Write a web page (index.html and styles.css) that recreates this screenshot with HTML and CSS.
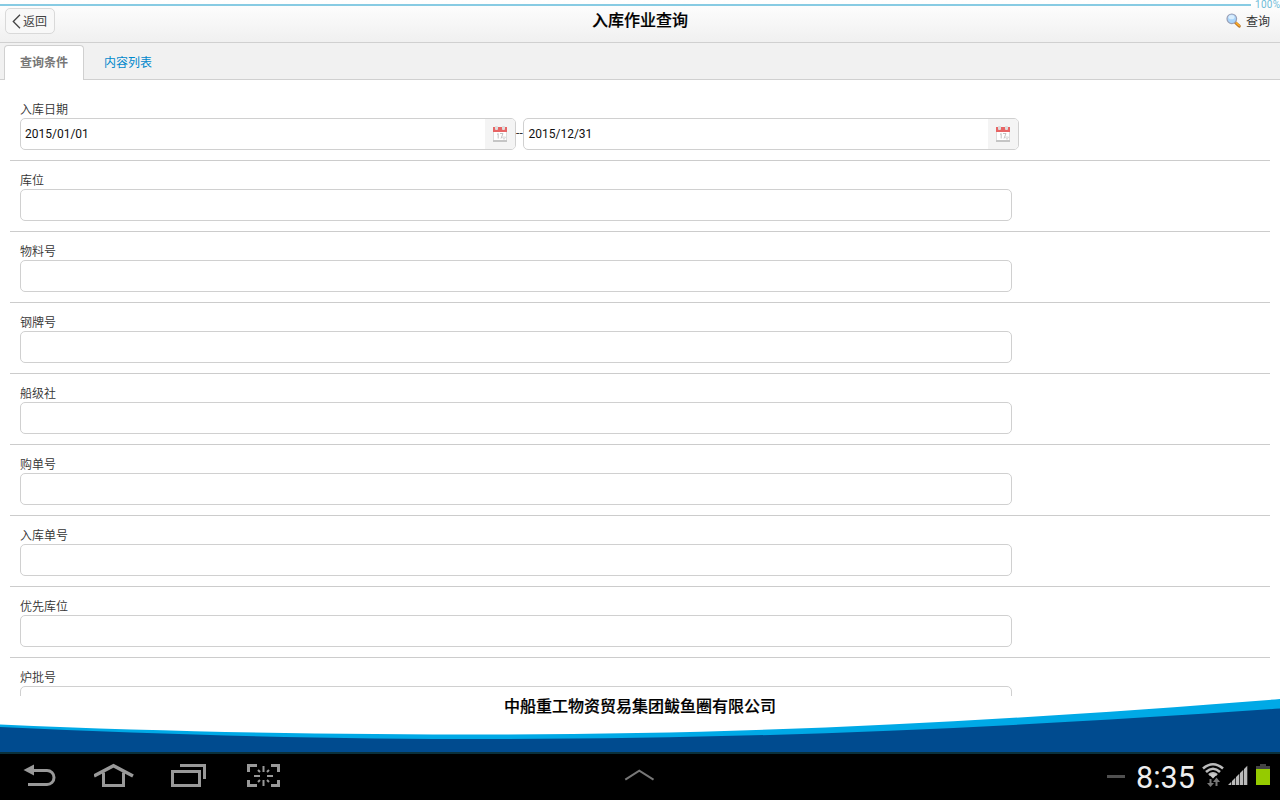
FILE: index.html
```html
<!DOCTYPE html>
<html lang="zh-CN">
<head>
<meta charset="utf-8">
<title>入库作业查询</title>
<link rel="stylesheet" href="styles.css">
</head>
<body>
<div class="screen">
  <header class="header">
    <div class="progress"><span class="progress-line"></span><span class="progress-text">100%</span></div>
    <button class="back"><svg class="back-icon" width="9" height="15" viewBox="0 0 9 15"><path d="M8 .8 1.3 7.5 8 14.2" fill="none" stroke="#444" stroke-width="1.3"/></svg><span class="back-text">返回</span></button>
    <h1 class="title">入库作业查询</h1>
    <a class="search">
      <svg width="16" height="16" viewBox="0 0 16 16"><path d="m9.3 9.5 4 3.700" stroke="#b87528" stroke-width="3" stroke-linecap="round"/><path d="m10.2 9.9 3.100 2.900" stroke="#ffad25" stroke-width="1.5" stroke-linecap="round"/><circle cx="5.8" cy="5.8" r="4.8" fill="#a9d5fb" stroke="#9a9fb5" stroke-width="1.2"/><ellipse cx="5.5" cy="4.2" rx="3" ry="2.1" fill="#d9eefe"/></svg>
      <span>查询</span>
    </a>
  </header>
  <nav class="tabs"><a class="tab tab-active">查询条件</a><a class="tab">内容列表</a></nav>
  <main class="form">
    <section class="field">
      <label class="label">入库日期</label>
      <div class="dates">
        <div class="date"><span class="date-value">2015/01/01</span><span class="date-button"><svg width="14" height="16" viewBox="0 0 14 16"><path fill="#fff" d="M0 5h14v9H0z"/><path fill="#e76565" d="M0 1h14v5H0z"/><path fill="#c5c5c5" d="M0 14h14v2H0z"/><path d="M.5 6v8M13.5 6v8" stroke="#ddd"/><rect x="2" width="3" height="4" rx="1" fill="#ddd"/><rect x="9" width="3" height="4" rx="1" fill="#ddd"/><path d="m4 8.5 1.2-1v5M7 7.5h3l-2 5" fill="none" stroke="#bbb" stroke-width=".9"/><path d="M9.5 11h3l-1.5 2.5z" fill="#fff" stroke="#ccc" stroke-width=".7"/></svg></span></div>
        <span class="dash">--</span>
        <div class="date"><span class="date-value date-end">2015/12/31</span><span class="date-button"><svg width="14" height="16" viewBox="0 0 14 16"><path fill="#fff" d="M0 5h14v9H0z"/><path fill="#e76565" d="M0 1h14v5H0z"/><path fill="#c5c5c5" d="M0 14h14v2H0z"/><path d="M.5 6v8M13.5 6v8" stroke="#ddd"/><rect x="2" width="3" height="4" rx="1" fill="#ddd"/><rect x="9" width="3" height="4" rx="1" fill="#ddd"/><path d="m4 8.5 1.2-1v5M7 7.5h3l-2 5" fill="none" stroke="#bbb" stroke-width=".9"/><path d="M9.5 11h3l-1.5 2.5z" fill="#fff" stroke="#ccc" stroke-width=".7"/></svg></span></div>
      </div>
    </section>
    <section class="field"><label class="label">库位</label><input class="input"></section>
    <section class="field"><label class="label">物料号</label><input class="input"></section>
    <section class="field"><label class="label">钢牌号</label><input class="input"></section>
    <section class="field"><label class="label">船级社</label><input class="input"></section>
    <section class="field"><label class="label">购单号</label><input class="input"></section>
    <section class="field"><label class="label">入库单号</label><input class="input"></section>
    <section class="field"><label class="label">优先库位</label><input class="input"></section>
    <section class="field"><label class="label">炉批号</label><input class="input"></section>
  </main>
  <footer class="footer">
    <svg class="wave" width="1280" height="56" viewBox="0 0 1280 56"><path fill="#00a9e6" d="M0 28.5C180 36.5 340 38.5 490 38.5C760 38.5 1000 25 1280 3V56H0z"/><path fill="#004b8f" d="M0 31C180 39.5 340 43 490 43C760 43 1000 32 1280 12.5V56H0z"/></svg>
    <span class="company">中船重工物资贸易集团鲅鱼圈有限公司</span>
  </footer>
  <div class="system">
    <div class="nav-keys">
      <svg width="34" height="26" viewBox="0 0 34 26"><path d="M9 8.500H24a7 7 0 0 1 0 14H5" fill="none" stroke="#999" stroke-width="3"/><path d="M.5 8 11 2.500v11z" fill="#999"/></svg>
      <svg width="40" height="26" viewBox="0 0 40 26"><path d="M0 14 19.500 3.700 39 14" fill="none" stroke="#999" stroke-width="3.500"/><path d="M9.500 10.500v13h20v-13" fill="none" stroke="#999" stroke-width="3"/></svg>
      <svg width="36" height="26" viewBox="0 0 36 26"><path d="M1.500 9.500h27v14h-27zM9 3.500h24.500V17" fill="none" stroke="#999" stroke-width="3"/></svg>
      <svg width="34" height="26" viewBox="0 0 34 26"><path d="M1.500 10V3.500H10M24 3.500h7.500V10M1.500 18v5.500H10M24 23.500h7.500V18" fill="none" stroke="#999" stroke-width="3"/><path d="M16.500 4v6M16.500 18v6M7 14h6M20 14h6M11 8l2 2M22 8l-2 2M11 20l2-2M22 20l-2-2" stroke="#999" stroke-width="2" fill="none"/></svg>
    </div>
    <svg class="up" width="30" height="12" viewBox="0 0 30 12"><path d="m1.300 10.700 14-9 14.200 9" fill="none" stroke="#777" stroke-width="2"/></svg>
    <div class="status">
      <span class="mark"></span>
      <span class="clock">8:35</span>
      <svg class="signals" width="68" height="26" viewBox="0 0 68 26"><g fill="none" stroke="#bbb" stroke-width="2.600"><path d="M1 6.500Q11 -2 21 6.500M4 10Q11 3.500 18 10M7 13Q11 9.500 15 13"/></g><path d="m7.500 13 3.500 3.500 3.500-3.500q-3.500-2.500-7 0z" fill="#ccc"/><path d="M8.500 17v6M14.500 24v-6" stroke="#777" stroke-width="2"/><path d="M5 21h7l-3.500 4zM11 20h7l-3.500-4.500z" fill="#777"/><path fill="#bbb" d="M26 23l3.300-3.300v3.300zM30 19l3.300-3.300v7.300h-3.300zM34 15l3.300-3.300v11.300h-3.300zM38 11l3.300-3.300v15.300h-3.300zM42 7l3.300-3.300v19.300h-3.300z"/><path fill="#444" d="M54 4h4V2h6v2h4v3H54z"/><path fill="#95cb00" d="M54 7h14v16H54z"/></svg>
    </div>
  </div>
</div>
</body>
</html>
```
FILE: styles.css
```css
* { box-sizing: border-box; }
body { margin: 0; font: 12px/18px Roboto, "Noto Sans CJK SC", sans-serif; color: #333; background: #fff; }
.screen { display: flex; flex-direction: column; width: 1280px; height: 800px; overflow: hidden; }
svg { flex: none; display: block; }
.header { position: relative; flex: none; height: 43px; display: flex; justify-content: space-between; align-items: flex-start; padding: 8px 10px 0 5px; border-bottom: 1px solid #d0d0d0; background: linear-gradient(#fff, #f0f0f0); }
.progress { position: absolute; top: 0; left: 0; width: 1280px; height: 10px; display: flex; align-items: center; }
.progress-line { flex: none; width: 1251px; height: 2px; background: #87cbe3; }
.progress-text { margin-left: 4px; font-size: 10px; line-height: 10px; letter-spacing: .3px; color: #6fbcd8; white-space: nowrap; }
.back { display: flex; align-items: center; gap: 2px; width: 50px; height: 26px; padding: 0 0 0 6px; border: 1px solid #d9d9d9; border-radius: 5px; background: #f8f8f8; font: inherit; color: #444; }
.back-text { padding-top: 1px; }
.title { position: absolute; left: 0; right: 0; top: 9px; margin: 0; text-align: center; font-size: 16px; line-height: 24px; font-weight: 500; color: #000; -webkit-text-stroke: .2px #000; pointer-events: none; }
.search { display: flex; align-items: center; gap: 4px; height: 26px; color: #333; }
.search span { padding-top: 1px; }
.tabs { flex: none; display: flex; height: 37px; padding: 2px 4px 0; background: #f1f1f1; box-shadow: inset 0 -1px #d0d0d0; }
.tab { width: 80px; height: 35px; padding: 9px 0 0; text-align: center; color: #0088cc; margin-right: 4px; }
.tab-active { border: 1px solid #d0d0d0; border-bottom: 0; border-radius: 4px 4px 0 0; padding-top: 8px; background: #fff; color: #777; font-weight: 700; }
.form { flex: none; height: 616px; padding: 10px 10px 0; overflow: hidden; }
.field { height: 71px; padding: 10px 10px 0; border-bottom: 1px solid #ccc; }
.label { display: block; height: 18px; line-height: 20px; font-weight: 350; }
.input { display: block; width: 992px; height: 32px; border: 1px solid #d0d0d0; border-radius: 5px; background: #fff; }
.dates { display: flex; }
.date { flex: none; display: flex; width: 496px; height: 32px; border: 1px solid #d0d0d0; border-radius: 5px; overflow: hidden; }
.date-value { flex: 1; padding-left: 4px; line-height: 30px; color: #111; }
.date-end { padding-left: 4.5px; }
.date-button { display: flex; justify-content: center; align-items: center; width: 30px; background: #f4f4f4; }
.dash { flex: none; width: 7px; line-height: 30px; font-size: 12px; letter-spacing: .2px; white-space: nowrap; }
.footer { position: relative; flex: none; height: 56px; background: #fff; text-align: center; }
.wave { position: absolute; left: 0; top: 0; }
.company { position: relative; display: block; line-height: 21px; font-size: 16px; font-weight: 500; color: #000; -webkit-text-stroke: .2px #000; }
.system { position: relative; flex: none; display: flex; justify-content: space-between; align-items: flex-start; height: 48px; padding: 10px 10px 0 23px; border-top: 2px solid #0a303b; background: #000; }
.nav-keys { display: flex; gap: 37px; }
.nav-keys svg { margin-top: -2px; }
.nav-keys svg:last-child { margin-left: 3px; }
.up { position: absolute; left: 624px; top: 15px; }
.status { display: flex; align-items: flex-start; }
.mark { width: 18px; height: 3px; margin: 11px 11px 0 0; background: #505050; }
.clock { width: 66px; font-size: 30.5px; line-height: 27px; color: #eee; }
.signals { margin-top: -2px; }
```
